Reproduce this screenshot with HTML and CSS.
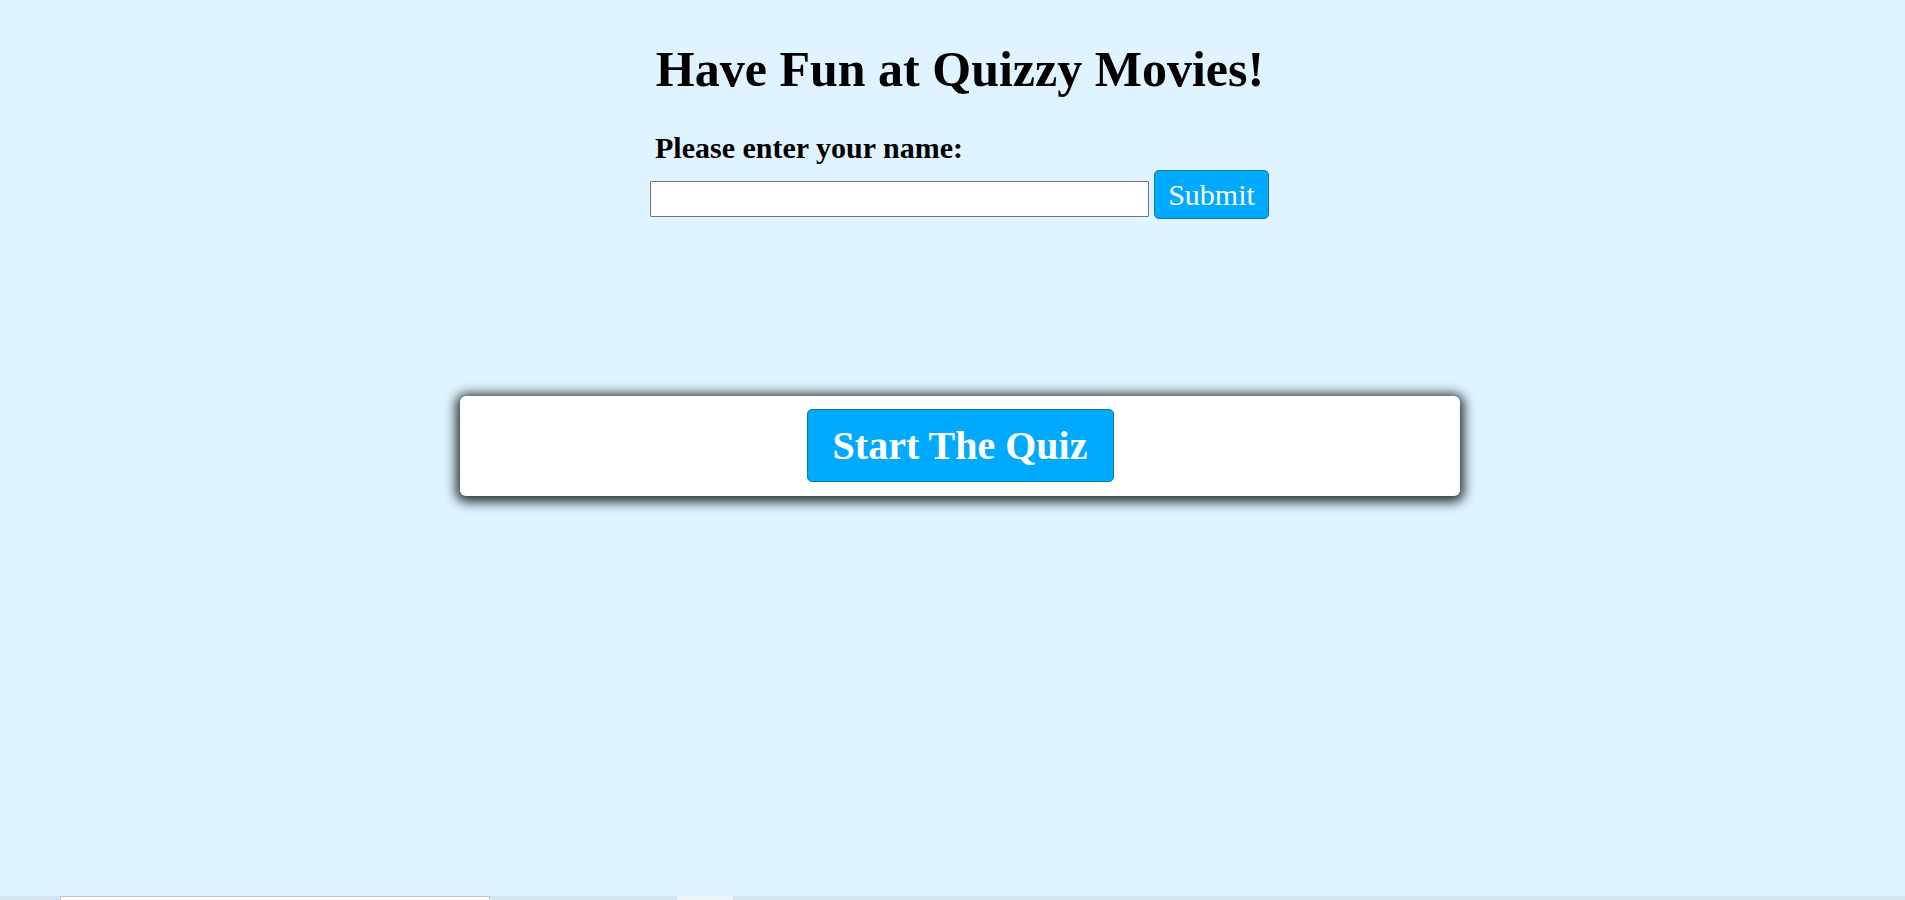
FILE: index.html
```html
<!DOCTYPE html>
<html lang="en">
<head>
<meta charset="utf-8">
<title>Quizzy Movies</title>
<link rel="stylesheet" href="styles.css">
</head>
<body>
<main class="page">
  <h1 class="title">Have Fun at Quizzy Movies!</h1>
  <form class="name-form">
    <label class="name-label" for="name">Please enter your name:</label>
    <div class="name-row">
      <input class="name-input" id="name" type="text">
      <button class="submit-btn" type="button">Submit</button>
    </div>
  </form>
  <section class="start-card">
    <button class="start-btn" type="button">Start The Quiz</button>
  </section>
</main>
<div class="bottom-strip">
  <div class="strip-box"></div>
  <div class="strip-light"></div>
</div>
</body>
</html>
```

FILE: styles.css
```css
html, body {
  height: 100%;
}
body {
  margin: 0;
  background: #dff4ff;
  font-family: "Liberation Serif", "Times New Roman", serif;
  color: #000;
  display: flex;
  flex-direction: column;
  overflow: hidden;
}
.page {
  flex: 1;
  padding-left: 15px;
  display: flex;
  flex-direction: column;
  align-items: center;
}
.title {
  margin: 42px 0 0;
  font-size: 50px;
  font-weight: bold;
  line-height: 55px;
  text-align: center;
}
.name-form {
  width: 620px;
  margin-top: 34px;
  display: flex;
  flex-direction: column;
}
.name-label {
  padding-left: 5px;
  font-size: 30px;
  font-weight: bold;
  line-height: 34px;
}
.name-row {
  display: flex;
  align-items: flex-end;
  gap: 5px;
  margin-top: 5px;
}
.name-input {
  width: 499px;
  height: 36px;
  box-sizing: border-box;
  border: 1px solid #767676;
  border-radius: 1px;
  background: #fff;
  margin: 0 0 2px;
  padding: 2px 4px;
  font-family: inherit;
  font-size: 20px;
}
.submit-btn {
  width: 115px;
  height: 49px;
  box-sizing: border-box;
  background: #00aaff;
  color: #fff;
  border: 1px solid #0a77ad;
  border-radius: 5px;
  font-family: inherit;
  font-size: 30px;
  padding: 0;
  margin: 0;
}
.start-card {
  width: 1000px;
  height: 100px;
  box-sizing: border-box;
  margin-top: 177px;
  background: #fff;
  border-radius: 6px;
  box-shadow: 0 2px 12px 4px rgba(30, 35, 40, 0.95);
  display: flex;
  justify-content: center;
  padding-top: 13px;
}
.start-btn {
  width: 307px;
  height: 73px;
  box-sizing: border-box;
  background: #00aaff;
  color: #fff;
  border: 1px solid #0a77ad;
  border-radius: 5px;
  font-family: inherit;
  font-size: 40px;
  font-weight: bold;
  padding: 0;
  margin: 0;
}
.bottom-strip {
  height: 4px;
  background: #d3e5ee;
  display: flex;
  flex: none;
}
.strip-box {
  margin-left: 60px;
  width: 428px;
  background: #fff;
  border-top: 1px solid #c4c4c4;
  border-left: 1px solid #c4c4c4;
  border-right: 1px solid #c4c4c4;
}
.strip-light {
  margin-left: 187px;
  width: 56px;
  background: #edf4f7;
  border-right: 2px solid #dde;
}
```
